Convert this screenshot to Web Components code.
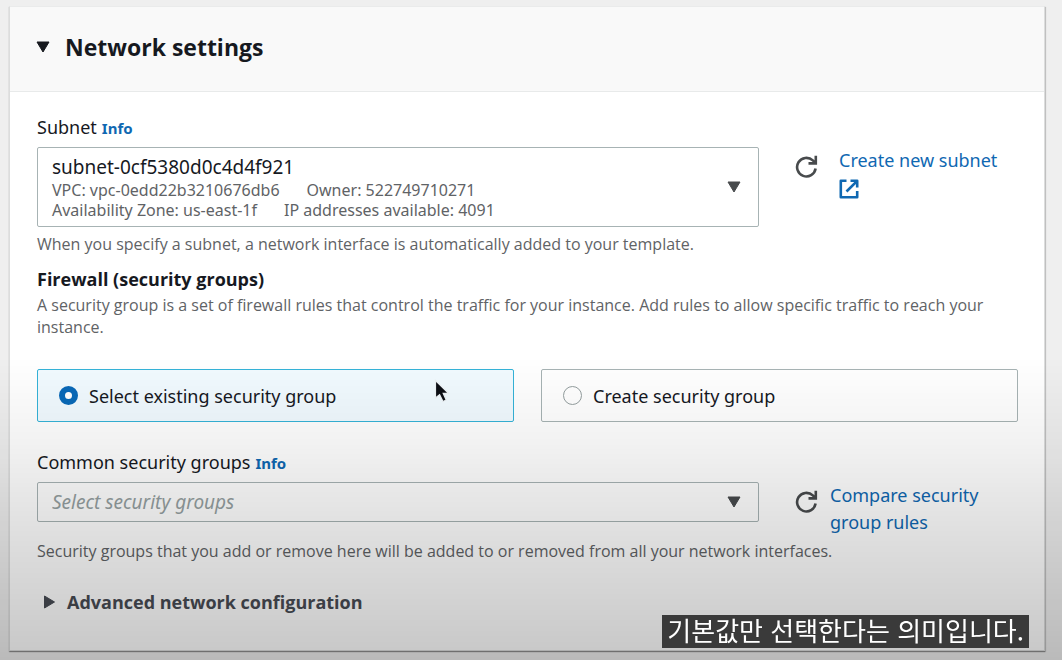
<!DOCTYPE html>
<html lang="en">
<head>
<meta charset="utf-8">
<meta name="viewport" content="width=device-width, initial-scale=1">
<title>Network settings</title>
<style>
  body {
    margin: 0;
    padding: 6px 17px 8px 9px;
    background: #efefef;
    color: #16191f;
    font: 18px/26px "Noto Sans", "Open Sans", sans-serif;
    --link: #0f68b2;
    --muted: #5f6366;
    --line: #a7b3b4;
  }
</style>
</head>
<body>
<settings-panel heading="Network settings">
  <form-field label="Subnet" info>
    <select-box value="subnet-0cf5380d0c4d4f921">
      <span slot="details">VPC: vpc-0edd22b3210676db6</span>
      <span slot="details">Owner: 522749710271</span>
      <span slot="more">Availability Zone: us-east-1f</span>
      <span slot="more">IP addresses available: 4091</span>
    </select-box>
    <field-action slot="action" label="Create new subnet" external></field-action>
    <span slot="hint">When you specify a subnet, a network interface is automatically added to your template.</span>
  </form-field>

  <section-intro heading="Firewall (security groups)">A security group is a set of firewall rules that control the traffic for your instance. Add rules to allow specific traffic to reach your instance.</section-intro>

  <radio-tiles></radio-tiles>

  <form-field label="Common security groups" info loose>
    <select-box placeholder="Select security groups"></select-box>
    <field-action slot="action" label="Compare security group rules"></field-action>
    <span slot="hint">Security groups that you add or remove here will be added to or removed from all your network interfaces.</span>
  </form-field>

  <expand-row>Advanced network configuration</expand-row>
</settings-panel>
<bottom-shade></bottom-shade>
<mouse-pointer></mouse-pointer>
<video-caption lang="ko">기본값만 선택한다는 의미입니다.</video-caption>

<script>
  const define = (name, render) => customElements.define(name, class extends HTMLElement {
    connectedCallback() {
      if (this.shadowRoot) return;
      const root = this.attachShadow({ mode: "open" });
      root.innerHTML = `<style>*{box-sizing:border-box}</style>` + render(this);
    }
  });

  define("settings-panel", el => `
    <style>
      :host { display: block; background: #fff; border: 1px solid #dcdddd; border-top-color: #eaebeb; box-shadow: 0 1px 1px rgba(0,0,0,.3), 1px 1px 1px rgba(0,0,0,.15); }
      header { background: #f9f9f9; border-bottom: 1px solid #e8eaea; padding: 23px 26px 27px; }
      h2 { margin: 0; font-size: 23px; line-height: 34px; font-weight: 700; font-family: "Open Sans", "Noto Sans", sans-serif; }
      button { all: unset; display: flex; align-items: center; gap: 15px; cursor: pointer; }
      main { padding: 22px 26px 35px 27px; }
    </style>
    <header><h2><button type="button" aria-expanded="true">
      <svg width="14" height="12" viewBox="0 0 14 12" aria-hidden="true"><path d="M1 1h12L7 11z" fill="#16191f" stroke="#16191f" stroke-linejoin="round"/></svg>
      ${el.getAttribute("heading")}</button></h2></header>
    <main><slot></slot></main>`);

  define("form-field", el => `
    <style>
      :host { display: block; }
      .label { display: flex; align-items: baseline; gap: 5px; height: 26px; margin-bottom: 7px; font-size: 18px; }
      a { color: var(--link); font-size: 15px; font-weight: 700; text-decoration: none; }
      .row { display: grid; grid-template-columns: minmax(0, 1fr) 223px; gap: 36px; }
      .action { height: 0; }
      .hint { margin-top: 6px; font: 16px/22px "Open Sans", "Noto Sans", sans-serif; color: var(--muted); }
      :host([loose]) .hint { margin-top: 18px; }
    </style>
    <div class="label"><span>${el.getAttribute("label")}</span><a href="#info">Info</a></div>
    <div class="row"><slot></slot><div class="action"><slot name="action"></slot></div></div>
    <div class="hint"><slot name="hint"></slot></div>`);

  define("select-box", el => {
    const value = el.getAttribute("value");
    return `
    <style>
      :host { display: grid; align-items: center; }
      select { grid-area: 1 / 1; width: 100%; height: 40px; padding: 0 50px 0 14px; border: 1px solid var(--line); border-radius: 2px; background: transparent; appearance: none; font: inherit; font-size: 19px; color: #16191f; }
      select.empty { font-style: italic; color: #95a0a1; }
      select.rich { height: 80px; padding-bottom: 40px; }
      .text { grid-area: 1 / 1; align-self: end; padding: 0 15px 7px; pointer-events: none; font-size: 16px; line-height: 20px; color: var(--muted); }
      .text div { display: flex; gap: 27px; }
      svg { grid-area: 1 / 1; justify-self: end; margin-right: 18px; pointer-events: none; }
    </style>
    <select aria-label="${el.closest("form-field").getAttribute("label")}" class="${value ? "rich" : "empty"}"><option>${value || el.getAttribute("placeholder")}</option></select>
    ${value ? `<div class="text"><div><slot name="details"></slot></div><div><slot name="more"></slot></div></div>` : ""}
    <svg width="14" height="12" viewBox="0 0 14 12" aria-hidden="true"><path d="M1 1h12L7 11z" fill="#484b4d" stroke="#484b4d" stroke-linejoin="round"/></svg>`;
  });

  define("field-action", el => `
    <style>
      :host { display: flex; align-items: flex-start; gap: 12px; }
      :host([external]) { gap: 21px; }
      button { all: unset; flex: none; display: block; margin-top: 8px; cursor: pointer; }
      button svg { display: block; }
      a { color: var(--link); font-size: 18px; line-height: 27px; text-decoration: none; max-width: 165px; }
      a svg { vertical-align: text-bottom; }
    </style>
    <button type="button" aria-label="Refresh"><svg width="23" height="24" viewBox="0 0 23 24" fill="none" stroke="#484b4d" stroke-width="2.600"><path d="M20.600 13.500A9.300 9.300 0 1 1 17.800 5.400L20.500 8"/><path d="M20.800 .8V8.400H13.500"/><path d="M20.500 4.500V8H17z" fill="#484b4d" stroke="none"/></svg></button>
    <a href="#open">${el.getAttribute("label")}${el.hasAttribute("external") ? `
      <svg width="20" height="20" viewBox="0 0 20 20" fill="none" stroke="#0f68b2" stroke-width="2.600" stroke-linejoin="round"><path d="M7.500 1.800H1.800V18.200H18.200V12"/><path d="M11.500 1.800H18.200V8.500M18.200 1.800L7.500 12.500"/><path d="M14 2H18V6z" fill="#0f68b2" stroke="none"/></svg>` : ""}</a>`);

  define("section-intro", el => `
    <style>
      :host { display: block; margin-top: 11px; }
      h3 { margin: 0 0 2px; font: 700 18px/26px "Open Sans", "Noto Sans", sans-serif; }
      p { margin: 0; font: 16px/22px "Open Sans", "Noto Sans", sans-serif; color: var(--muted); }
    </style>
    <h3>${el.getAttribute("heading")}</h3><p><slot></slot></p>`);

  define("radio-tiles", () => `
    <style>
      :host { display: grid; grid-template-columns: 1fr 1fr; gap: 27px; margin: 31px 0 27px; }
      label { display: flex; align-items: center; gap: 11px; height: 53px; padding: 0 21px; border: 1px solid var(--line); border-radius: 2px; background: #fff; font-size: 18px; cursor: pointer; }
      label:has(:checked) { border-color: #35b3d8; background: #f1faff; }
      input { appearance: none; flex: none; width: 19px; height: 19px; margin: 0; border: 1px solid #959fa0; border-radius: 50%; background: #fff; }
      input:checked { border: 6px solid #0969b8; }
    </style>
    <label><input type="radio" name="group" checked>Select existing security group</label>
    <label><input type="radio" name="group">Create security group</label>`);

  define("expand-row", () => `
    <style>
      :host { display: block; margin: 27px 0 0 7px; }
      button { all: unset; display: flex; align-items: center; gap: 12px; font: 700 18px/26px "Open Sans", "Noto Sans", sans-serif; color: #484c54; cursor: pointer; }
    </style>
    <button type="button" aria-expanded="false"><svg width="11" height="14" viewBox="0 0 11 14" aria-hidden="true"><path d="M.5 1v12L10.500 7z" fill="#484c54" stroke="#484c54" stroke-linejoin="round"/></svg><slot></slot></button>`);

  define("bottom-shade", () => `
    <style>:host { position: fixed; inset: 0; pointer-events: none; background: linear-gradient(transparent 54%, rgba(0,0,0,.05) 67%, rgba(0,0,0,.12) 80%, rgba(0,0,0,.22)); }</style>`);

  define("mouse-pointer", () => `
    <style>:host { position: absolute; left: 434px; top: 379px; pointer-events: none; } svg { display: block; }</style>
    <svg width="16" height="25" viewBox="0 0 16 25"><path d="M1.500 1.500V19L5.600 15.600L9 22.500L12.200 21L9.200 14.300H14.500Z" fill="#0c0e14" stroke="#e9eef1" stroke-width="1.200"/></svg>`);

  define("video-caption", () => `
    <style>:host { position: fixed; right: 33px; bottom: 12px; padding: 0 5px 4px; background: #3a3a3a; color: #fff; font: 26px/29px "Noto Sans CJK KR", sans-serif; }</style>
    <slot></slot>`);
</script>
</body>
</html>
